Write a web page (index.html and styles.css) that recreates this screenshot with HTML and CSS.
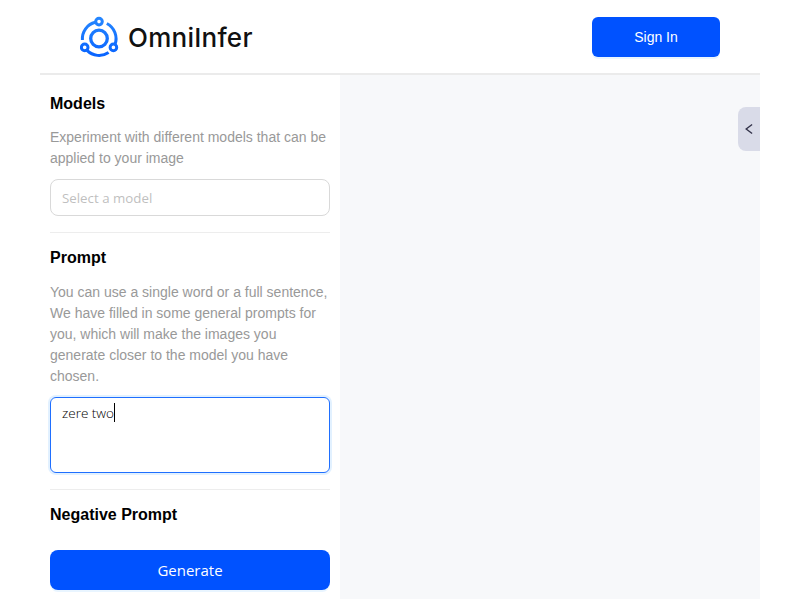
FILE: index.html
```html
<!DOCTYPE html>
<html lang="en">
<head>
<meta charset="utf-8">
<title>OmniInfer</title>
<link rel="stylesheet" href="styles.css">
</head>
<body>
<div class="app">
  <header class="header">
    <a class="brand">
      <svg class="logo" viewBox="0 0 40 42" width="40" height="42" fill="none">
        <defs><linearGradient id="g" x1="0" y1="0" x2="0" y2="42" gradientUnits="userSpaceOnUse"><stop offset="0" stop-color="#2788ff"/><stop offset="1" stop-color="#0762ff"/></linearGradient></defs>
        <g stroke="url(#g)" stroke-width="3">
          <circle cx="19" cy="22.5" r="8.3" stroke-width="3.3"/>
          <circle cx="19" cy="5.6" r="3.3"/>
          <circle cx="4.7" cy="31.4" r="3.3"/>
          <circle cx="33.4" cy="31.4" r="3.3"/>
          <path d="M2.4 24A17 17 0 0 1 15.2 6.3"/>
          <path d="M26.8 7.5A17 17 0 0 1 35 28.5"/>
          <path d="M7 34.4A17.1 17.1 0 0 0 28.6 36.6"/>
        </g>
      </svg>
      <span class="wordmark">OmniInfer</span>
    </a>
    <button class="sign-in">Sign In</button>
  </header>
  <main class="workspace">
    <aside class="panel">
      <section class="group">
        <h2>Models</h2>
        <p>Experiment with different models that can be applied to your image</p>
        <div class="select">Select a model</div>
      </section>
      <section class="group prompt">
        <h2>Prompt</h2>
        <p>You can use a single word or a full sentence, We have filled in some general prompts for you, which will make the images you generate closer to the model you have chosen.</p>
        <div class="textarea"><span class="typed">zere two</span><span class="caret"></span></div>
      </section>
      <section class="negative">
        <h2>Negative Prompt</h2>
      </section>
      <button class="generate">Generate</button>
    </aside>
    <div class="canvas">
      <button class="drawer" aria-label="Open panel"><svg width="9" height="12" viewBox="0 0 9 12" fill="none" stroke="#33334a" stroke-width="1.4"><path d="M7.1 1.5L1.2 6L7.1 10.5"/></svg></button>
    </div>
  </main>
</div>
</body>
</html>
```

FILE: styles.css
```css
* { box-sizing: border-box; }
body {
  margin: 0;
  background: #fff;
  font-family: "Liberation Sans", Arial, sans-serif;
  font-size: 14px;
}
button { border: 0; padding: 0; color: #fff; }
.app {
  width: 720px;
  height: 599px;
  margin: 0 auto;
  display: flex;
  flex-direction: column;
}
.header {
  height: 75px;
  flex: none;
  display: flex;
  justify-content: space-between;
  align-items: center;
  padding: 0 40px;
  border-bottom: 2px solid #ebebeb;
}
.brand { display: flex; align-items: center; height: 42px; }
.wordmark {
  margin-left: 8px;
  padding-top: 2px;
  font: 500 26px/42px Inter, sans-serif;
  letter-spacing: 0.25px;
  color: #111;
}
.sign-in {
  width: 128px;
  height: 40px;
  border-radius: 6px;
  background: #0052ff;
  box-shadow: 0 2px 0 #e9f5ff;
  font: 14px "Liberation Sans", Arial, sans-serif;
}
.workspace { flex: 1; display: flex; min-height: 0; }
.panel {
  width: 300px;
  padding: 19px 10px 9px;
  display: flex;
  flex-direction: column;
}
.group { padding-bottom: 16px; border-bottom: 1px solid #ededed; }
h2 { margin: 0; font-size: 16px; line-height: 20px; color: #000; }
p { margin: 13px 0 0; line-height: 21px; color: #999; }
.select {
  height: 37px;
  margin-top: 10px;
  padding: 0 11px;
  border: 1px solid #d9d9d9;
  border-radius: 8px;
  font: 13.3px/36px "Open Sans", sans-serif;
  color: #bfbfbf;
}
.prompt { padding-top: 15px; }
.prompt p { margin-top: 14px; }
.textarea {
  height: 76px;
  margin-top: 10px;
  padding: 5px 11px;
  display: flex;
  border: 1px solid #1f6fff;
  border-radius: 6px;
  box-shadow: 0 0 0 2px #e2f1ff;
  font: 300 13.5px/20px "Open Sans", sans-serif;
  color: #000;
}
.caret { width: 1px; height: 19px; background: #000; }
.negative { padding-top: 15px; }
.generate {
  height: 40px;
  margin-top: auto;
  border-radius: 8px;
  background: #0052ff;
  box-shadow: 0 2px 0 #e9f5ff;
  font: 15px "Open Sans", sans-serif;
}
.canvas {
  flex: 1;
  display: flex;
  justify-content: flex-end;
  align-items: flex-start;
  padding-top: 32px;
  background: #f7f8fa;
}
.drawer {
  width: 22px;
  height: 44px;
  display: flex;
  align-items: center;
  justify-content: center;
  background: #d9dbe8;
  border-radius: 8px 0 0 8px;
}
```
